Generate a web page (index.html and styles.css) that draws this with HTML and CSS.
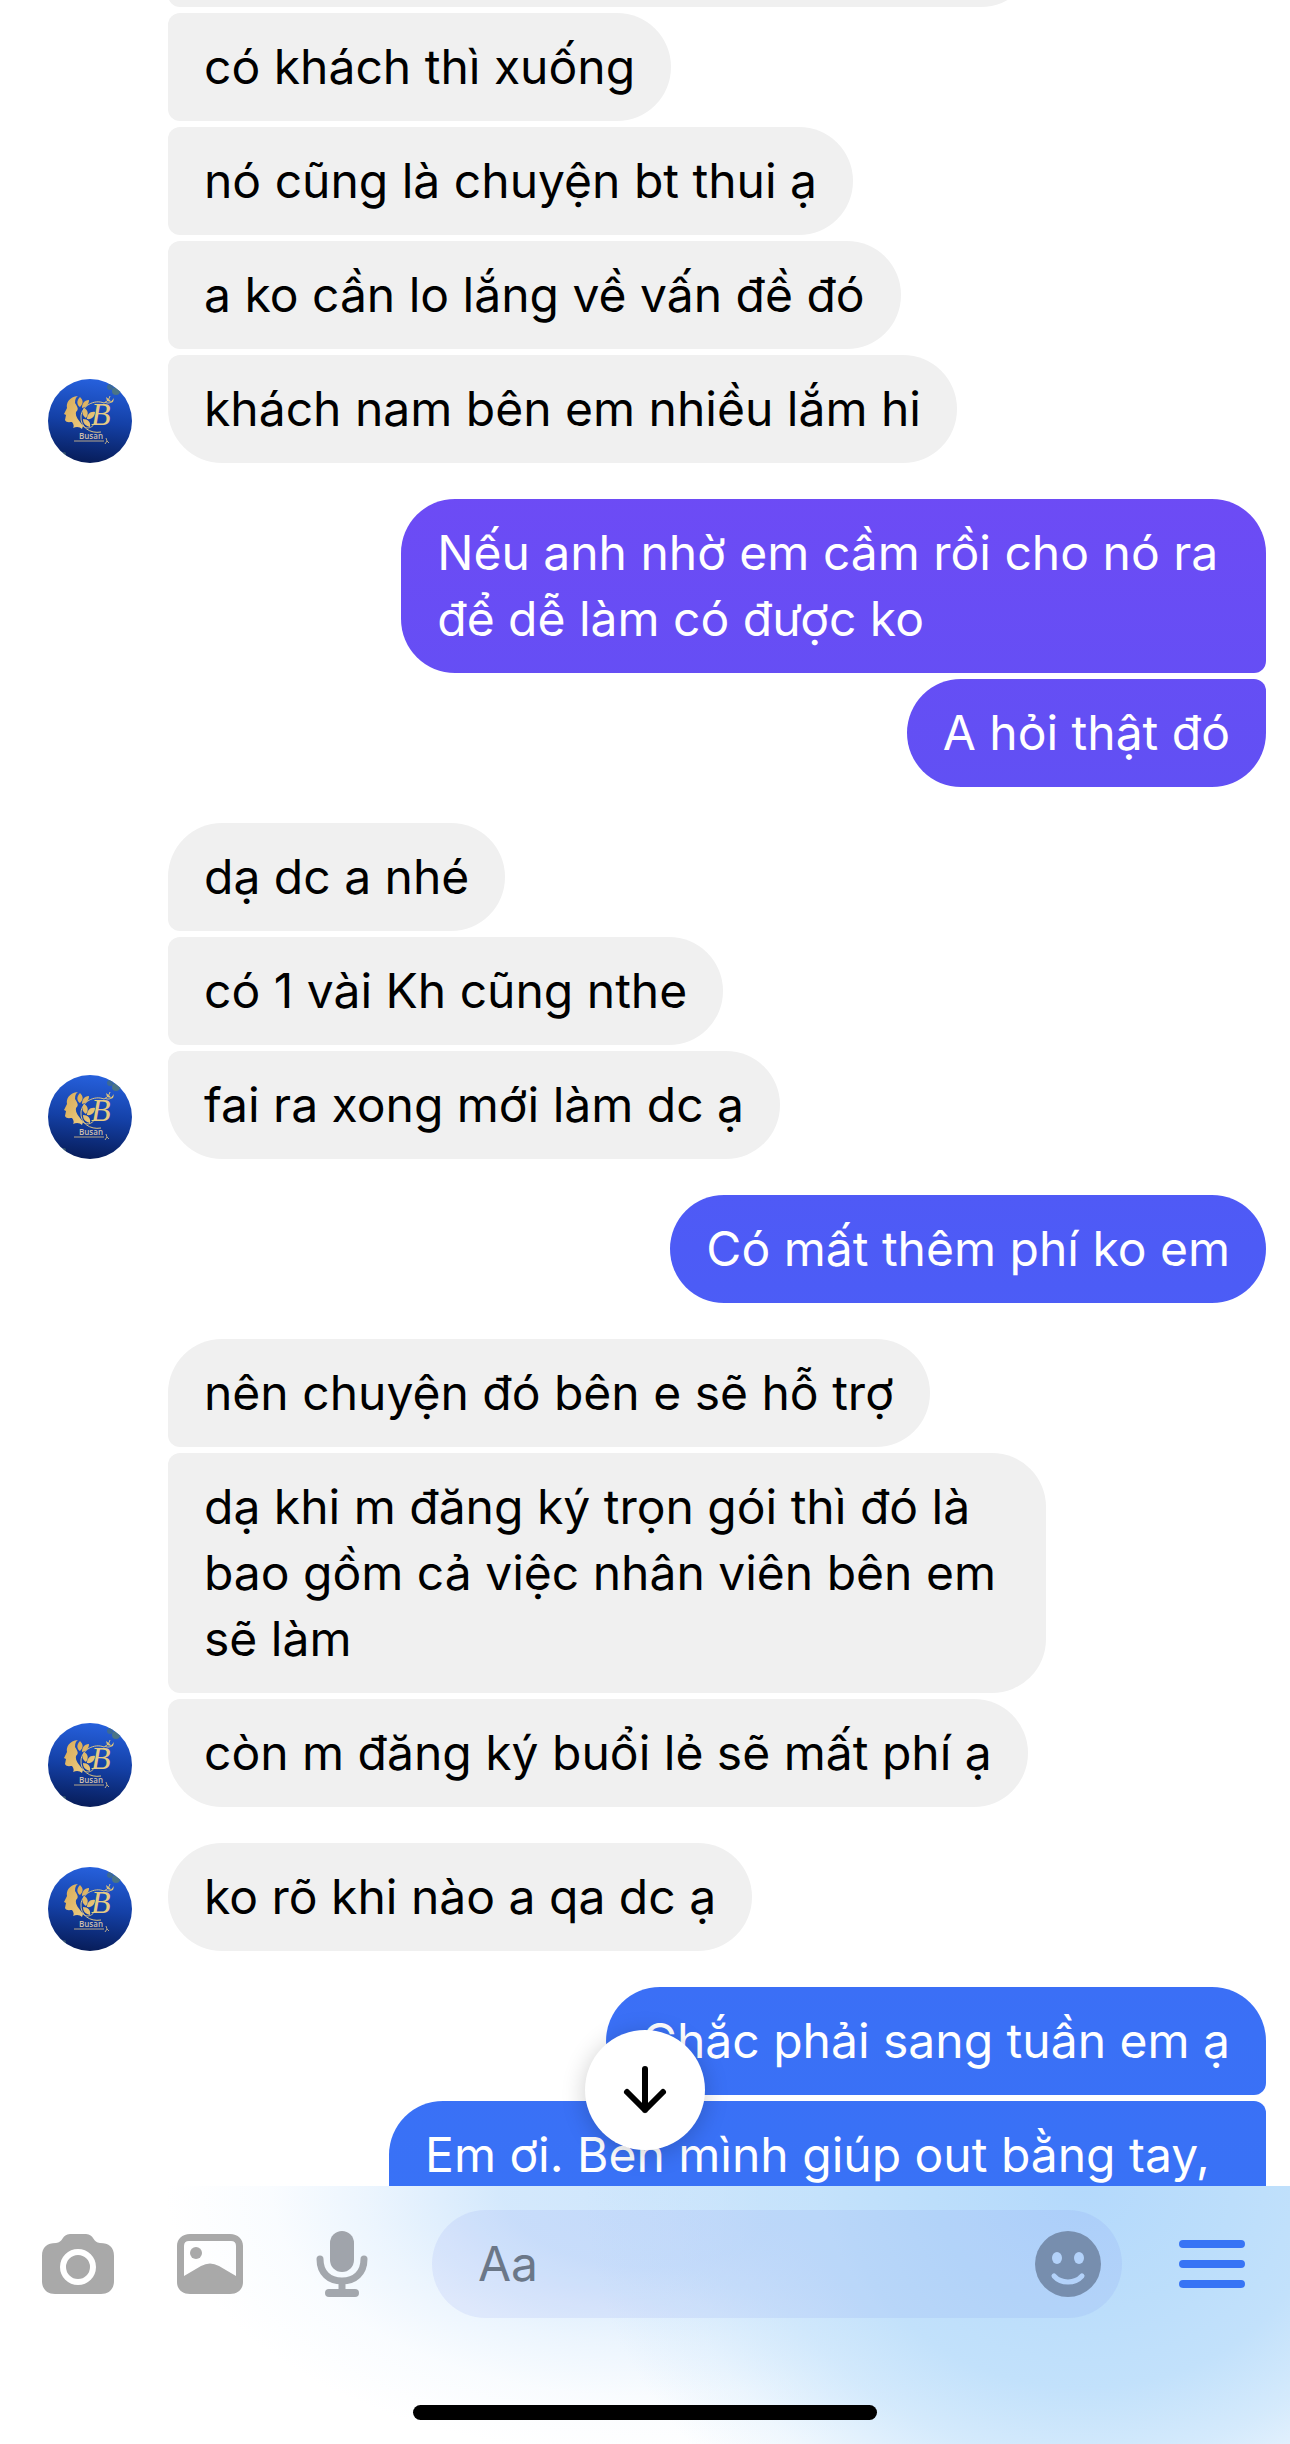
FILE: index.html
```html
<!DOCTYPE html>
<html lang="vi">
<head>
<meta charset="utf-8">
<meta name="viewport" content="width=device-width, initial-scale=1">
<title>Busan</title>
<link rel="stylesheet" href="styles.css">
</head>
<body>
<svg class="sprite" aria-hidden="true">
  <defs>
    <linearGradient id="navy" x1="0.5" y1="0" x2="0.4" y2="1">
      <stop offset="0" stop-color="#2660dc"/>
      <stop offset="0.5" stop-color="#1440a6"/>
      <stop offset="1" stop-color="#071c58"/>
    </linearGradient>
    <linearGradient id="gold" x1="0" y1="0" x2="1" y2="1">
      <stop offset="0" stop-color="#d9aa55"/>
      <stop offset="1" stop-color="#eccb80"/>
    </linearGradient>
    <clipPath id="disc"><circle cx="42" cy="42" r="42"/></clipPath>
    <symbol id="avatar" viewBox="0 0 84 84">
      <circle cx="42" cy="42" r="42" fill="url(#navy)"/>
      <g clip-path="url(#disc)">
        <circle cx="62" cy="8" r="3" fill="#3c6a94"/>
        <circle cx="68" cy="12" r="4" fill="#4a7486"/>
        <circle cx="16" cy="75" r="2" fill="#35566e"/>
      </g>
      <path fill="url(#gold)" d="M30 17C21 18 18 24 19 29L16 35L18 36L17 41C18 44 22 43 24 43C26 45 26 48 25 49C29 47 32 48 34 50L35 47C31 41 27 38 28 33C32 30 28 26 27 24C27 20 28 18 30 17Z"/>
      <path fill="url(#gold)" d="M32 18C28 22 29 26 32 28C36 24 35 21 32 18ZM41 21C36 21 34 25 34 29C39 28 41 25 41 21ZM36 29C33 34 35 37 38 39C41 35 40 31 36 29ZM47 33C42 32 39 36 39 40C44 41 47 37 47 33ZM35 40C35 45 38 47 42 48C43 43 40 40 35 40Z"/>
      <path fill="none" stroke="#dcc484" stroke-width="1" d="M56 24C46 20 34 27 33 37C32 48 42 55 53 53M32 44C38 52 44 49 47 44M56 24C60 22 61 20 62 17M57 23C60 25 63 24 65 21"/>
      <path fill="#d9c07a" d="M58 18L62 21L63 23L59 22ZM66 19L65 23L62 24Z"/>
      <text class="mark-letter" x="43" y="46">B</text>
      <text class="mark-name" x="43" y="60" text-anchor="middle">Busan</text>
      <path stroke="#b7a789" stroke-width="1" d="M26 62H56"/>
      <path fill="none" stroke="#b7a789" stroke-width="1" d="M58 59L59 62L57 65M59 62L61 64"/>
    </symbol>
  </defs>
</svg>

<main class="chat">
  <div class="viewport">
    <div class="thread">
      <div class="group group--in group--continued">
        <ul class="stack">
          <li class="bubble bubble--previous" aria-hidden="true"></li>
          <li class="bubble">có khách thì xuống</li>
          <li class="bubble">nó cũng là chuyện bt thui ạ</li>
          <li class="bubble">a ko cần lo lắng về vấn đề đó</li>
          <li class="bubble">khách nam bên em nhiều lắm hi</li>
        </ul>
        <svg class="avatar" role="img" aria-label="Busan"><use href="#avatar"/></svg>
      </div>

      <div class="group group--out">
        <ul class="stack">
          <li class="bubble">Nếu anh nhờ em cầm rồi cho nó ra để dễ làm có được ko</li>
          <li class="bubble">A hỏi thật đó</li>
        </ul>
      </div>

      <div class="group group--in">
        <ul class="stack">
          <li class="bubble">dạ dc a nhé</li>
          <li class="bubble">có 1 vài Kh cũng nthe</li>
          <li class="bubble">fai ra xong mới làm dc ạ</li>
        </ul>
        <svg class="avatar" role="img" aria-label="Busan"><use href="#avatar"/></svg>
      </div>

      <div class="group group--out">
        <ul class="stack">
          <li class="bubble">Có mất thêm phí ko em</li>
        </ul>
      </div>

      <div class="group group--in">
        <ul class="stack">
          <li class="bubble">nên chuyện đó bên e sẽ hỗ trợ</li>
          <li class="bubble">dạ khi m đăng ký trọn gói thì đó là bao gồm cả việc nhân viên bên em sẽ làm</li>
          <li class="bubble">còn m đăng ký buổi lẻ sẽ mất phí ạ</li>
        </ul>
        <svg class="avatar" role="img" aria-label="Busan"><use href="#avatar"/></svg>
      </div>

      <div class="group group--in">
        <ul class="stack">
          <li class="bubble">ko rõ khi nào a qa dc ạ</li>
        </ul>
        <svg class="avatar" role="img" aria-label="Busan"><use href="#avatar"/></svg>
      </div>

      <div class="group group--out">
        <ul class="stack">
          <li class="bubble">Chắc phải sang tuần em ạ</li>
          <li class="bubble bubble--long">Em ơi. Bên mình giúp out bằng tay,</li>
        </ul>
      </div>
    </div>

    <button class="jump" type="button" aria-label="Xuống cuối">
      <svg width="48" height="52" viewBox="0 0 48 52" fill="none" stroke="#000" stroke-width="6" stroke-linecap="round" stroke-linejoin="round"><path d="M24 5V46M6 28L24 46L42 28"/></svg>
    </button>
  </div>

  <form class="composer">
    <div class="toolbar">
      <div class="tools">
        <button class="tool" type="button" aria-label="Máy ảnh">
          <svg width="72" height="66" viewBox="0 0 72 66"><path fill="#a9a9a9" fill-rule="evenodd" d="M28 3H44C52 3 51 12 58 12C67 12 72 16 72 25V50C72 58 67 63 59 63H13C5 63 0 58 0 50V25C0 16 5 12 14 12C21 12 20 3 28 3ZM36 18A18 18 0 1 0 36 54A18 18 0 1 0 36 18ZM36 24A12 12 0 1 1 36 48A12 12 0 1 1 36 24Z"/></svg>
        </button>
        <button class="tool" type="button" aria-label="Ảnh">
          <svg width="66" height="66" viewBox="0 0 66 66"><path fill="#a9a9a9" fill-rule="evenodd" d="M13 3H53C61 3 66 8 66 15V51C66 58 61 63 53 63H13C5 63 0 58 0 51V15C0 8 5 3 13 3ZM12 10Q7 10 7 15V45L24 35Q33 30 42 35L59 45V15Q59 10 54 10Z"/><circle cx="19" cy="22" r="6" fill="#a9a9a9"/></svg>
        </button>
        <button class="tool" type="button" aria-label="Ghi âm">
          <svg width="52" height="66" viewBox="0 0 52 66"><rect x="14" y="0" width="24" height="41" rx="12" fill="#a0a4ab"/><path d="M4 28C4 42 13 50 26 50S48 42 48 28M26 50V62" fill="none" stroke="#a3a7ad" stroke-width="7" stroke-linecap="round"/><rect x="9" y="58" width="34" height="8" rx="4" fill="#a3a7ad"/></svg>
        </button>
      </div>
      <div class="field">
        <input class="field__input" type="text" placeholder="Aa" aria-label="Tin nhắn">
        <button class="tool" type="button" aria-label="Biểu tượng cảm xúc">
          <svg width="66" height="66" viewBox="0 0 66 66"><circle cx="33" cy="33" r="33" fill="#778eae"/><ellipse cx="22" cy="27" rx="5" ry="6" fill="#b3d2fa"/><ellipse cx="44" cy="27" rx="5" ry="6" fill="#b3d2fa"/><path d="M19 45C26 53 40 53 47 45" fill="none" stroke="#b3d2fa" stroke-width="5" stroke-linecap="round"/></svg>
        </button>
      </div>
      <button class="tool" type="button" aria-label="Menu">
        <svg width="66" height="66" viewBox="0 0 66 66" stroke="#3774f5" stroke-width="8" stroke-linecap="round"><path d="M4 13H62M4 33H62M4 53H62"/></svg>
      </button>
    </div>
    <div class="home-indicator"></div>
  </form>
</main>
</body>
</html>
```
FILE: styles.css
```css
*,
*::before,
*::after {
  box-sizing: border-box;
}

body {
  margin: 0;
  background: #fff;
  color: #000;
  font-family: Inter, "Noto Sans", sans-serif;
  font-size: 48px;
  line-height: 66px;
}

button {
  padding: 0;
  border: 0;
  background: none;
  cursor: pointer;
}

svg {
  display: block;
}

.sprite {
  position: absolute;
  width: 0;
  height: 0;
}

.chat {
  display: flex;
  flex-direction: column;
  height: 100vh;
}

/* Conversation */

.viewport {
  position: relative;
  display: flex;
  flex: 1;
  min-height: 0;
}

.thread {
  display: flex;
  flex: 1;
  flex-direction: column;
  gap: 36px;
  padding: 0 24px 0 48px;
  overflow-y: auto;
  scrollbar-width: none;
}

.group {
  display: flex;
  flex-shrink: 0;
  align-items: flex-end;
  gap: 36px;
}

.group--in {
  flex-direction: row-reverse;
}

.group--continued {
  margin-top: -101px;
}

.avatar {
  flex: none;
  width: 84px;
  height: 84px;
}

.mark-letter {
  fill: #e6cb84;
  font: italic 32px "Liberation Serif", serif;
}

.mark-name {
  fill: #cdbfae;
  font: 600 8px "Open Sans", sans-serif;
}

.stack {
  display: flex;
  flex: 1;
  flex-direction: column;
  gap: 6px;
  margin: 0;
  padding: 0;
  list-style: none;
}

.bubble {
  max-width: 80%;
  min-height: 108px;
  padding: 21px 36px;
  border-radius: 54px;
}

.group--in .stack {
  align-items: flex-start;
}

.group--in .bubble {
  background: #f0f0f0;
}

.group--in .bubble:not(:first-child) {
  border-top-left-radius: 12px;
}

.group--in .bubble:not(:last-child) {
  border-bottom-left-radius: 12px;
}

.group--out .stack {
  align-items: flex-end;
}

.group--out .bubble {
  max-width: 71%;
  background: linear-gradient(#7f44f4 0%, #6d4bf5 20%, #6150f4 32%, #4d5bf6 51%, #3a70f6 83%, #3774f6 100%) fixed;
  color: #fff;
}

.group--out .bubble:not(:first-child) {
  border-top-right-radius: 12px;
}

.group--out .bubble:not(:last-child) {
  border-bottom-right-radius: 12px;
}

.group--in .bubble--previous {
  width: 79%;
}

.group--out .bubble--long {
  width: 72%;
  max-width: none;
  min-height: 174px;
}

.jump {
  position: absolute;
  bottom: 36px;
  left: 50%;
  display: grid;
  place-items: center;
  width: 120px;
  height: 120px;
  border-radius: 50%;
  background: #fff;
  box-shadow: 0 4px 24px rgba(0, 0, 0, 0.2);
  transform: translateX(-50%);
}

/* Composer */

.composer {
  display: flex;
  flex-direction: column;
  align-items: center;
  gap: 87px;
  padding: 24px 0;
  background:
    radial-gradient(500px 420px at 84% 0, #b4d9fc 0%, #bcdefb 30%, #c2e1fb 48%, rgba(194, 225, 251, 0.7) 65%, rgba(194, 225, 251, 0.25) 84%, rgba(194, 225, 251, 0) 100%),
    radial-gradient(480px 270px at 50% 0, #cfe6fc 0%, rgba(207, 230, 252, 0.9) 30%, rgba(207, 230, 252, 0.4) 58%, rgba(207, 230, 252, 0.12) 78%, rgba(207, 230, 252, 0) 100%),
    #fff;
}

.toolbar {
  display: flex;
  align-items: center;
  align-self: stretch;
  gap: 54px;
  padding: 0 42px;
}

.tools {
  display: flex;
  gap: 60px;
}

.tool {
  display: grid;
  flex: none;
  place-items: center;
  width: 72px;
}

.field {
  display: flex;
  flex: 1;
  align-items: center;
  min-width: 0;
  height: 108px;
  padding: 0 18px 0 46px;
  border-radius: 54px;
  background: rgba(100, 120, 240, 0.1);
}

.field__input {
  flex: 1;
  min-width: 0;
  padding: 0;
  border: 0;
  outline: 0;
  background: none;
  color: #000;
  font: inherit;
}

.field__input::placeholder {
  color: #6b7788;
  opacity: 1;
}

.home-indicator {
  width: 36%;
  height: 15px;
  border-radius: 8px;
  background: #000;
}
```
